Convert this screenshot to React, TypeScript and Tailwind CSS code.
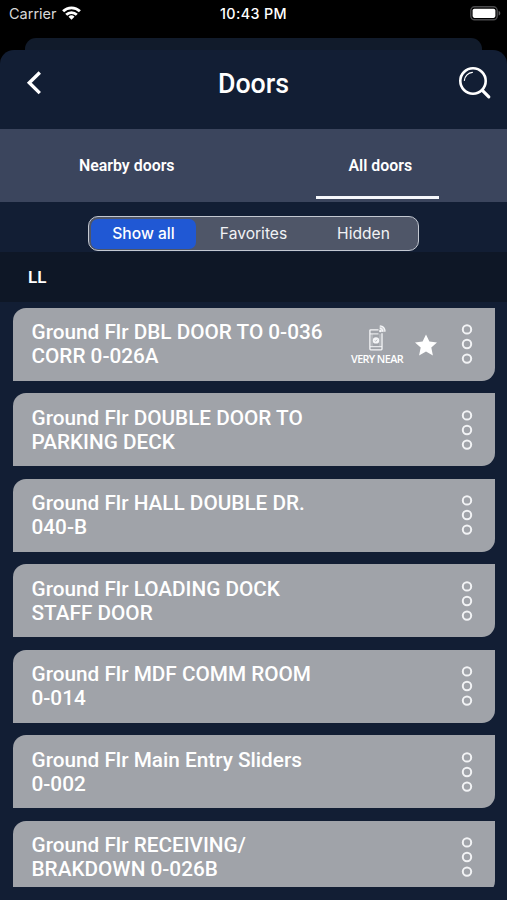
import { useState } from "react";
import { clsx } from "clsx";

type Door = {
  name: [string, string];
  veryNear?: boolean;
  favorite?: boolean;
};

const doors: Door[] = [
  { name: ["Ground Flr DBL DOOR TO 0-036", "CORR 0-026A"], veryNear: true, favorite: true },
  { name: ["Ground Flr DOUBLE DOOR TO", "PARKING DECK"] },
  { name: ["Ground Flr HALL DOUBLE DR.", "040-B"] },
  { name: ["Ground Flr LOADING DOCK", "STAFF DOOR"] },
  { name: ["Ground Flr MDF COMM ROOM", "0-014"] },
  { name: ["Ground Flr Main Entry Sliders", "0-002"] },
  { name: ["Ground Flr RECEIVING/", "BRAKDOWN 0-026B"] },
];

const tabs = ["Nearby doors", "All doors"];
const filters = ["Show all", "Favorites", "Hidden"];

// ── Icons ──────────────────────────────────────────────────

function WifiIcon() {
  return (
    <svg width="19" height="14" viewBox="0 0 19 14" fill="none" stroke="#fff" strokeWidth="2.8">
      <path d="M1.1 5.3a12 12 0 0 1 16.8 0" />
      <path d="M4.2 8.7a7.6 7.6 0 0 1 10.6 0" />
      <path d="m9.5 13.8-3-3a4.3 4.3 0 0 1 6 0Z" fill="#fff" stroke="none" />
    </svg>
  );
}

function BatteryIcon() {
  return (
    <svg width="31" height="15" viewBox="0 0 31 15">
      <rect x="0.8" y="0.8" width="26.4" height="13" rx="3.8" fill="#000" stroke="#4b4b4d" strokeWidth="1.4" />
      <rect x="2.6" y="2.7" width="22.8" height="9.2" rx="1.8" fill="#fff" />
      <path d="M28.6 5v4.6c1-.3 1.7-1.2 1.7-2.3s-.7-2-1.7-2.3Z" fill="#5c5c5e" />
    </svg>
  );
}

function BackIcon() {
  return (
    <svg width="16" height="24" viewBox="0 0 16 24" fill="none" stroke="#fff" strokeWidth="3.4">
      <path d="M13.8 1.5 3.3 11.8l10.5 10.3" />
    </svg>
  );
}

function SearchIcon() {
  return (
    <svg width="34" height="34" viewBox="0 0 34 34" fill="none" stroke="#fff" strokeLinecap="round">
      <circle cx="15" cy="15" r="12.7" strokeWidth="2.6" />
      <path d="m24.6 24.6 6.2 6.2" strokeWidth="3.2" />
      <path d="M6.4 14.3a9 9 0 0 1 8-8" strokeWidth="1.2" />
    </svg>
  );
}

function NearPhoneIcon() {
  return (
    <svg width="17" height="26" viewBox="0 0 17 26" fill="none" stroke="#f5f6f8">
      <path d="M9.5 4.8H1.7Q.9 4.8.9 5.6v18.4q0 .8.8.8h10.5q.8 0 .8-.8V8.3" strokeWidth="1.3" />
      <path d="M1 8.9h8.5M1 21.7h12" strokeWidth="1" />
      <path d="M3 9v12.5M11 9v12.5" strokeWidth="0.7" opacity="0.6" />
      <circle cx="7" cy="15.4" r="3.2" fill="#f5f6f8" stroke="none" />
      <path d="m5.8 15.5.9.9 1.5-1.8" stroke="#a0a3a9" strokeWidth="0.7" />
      <path d="M10.6 1.2q4.9.5 5.4 5.6l-5.4.2Z" fill="#f5f6f8" fillOpacity="0.55" stroke="none" />
      <path d="M10.8.9q5 .3 5.3 5.7M10.8 3.2q2.6.3 2.9 3.4" strokeWidth="1.3" />
      <circle cx="11.3" cy="6.1" r="1.2" fill="#f5f6f8" stroke="none" />
    </svg>
  );
}

function StarIcon() {
  return (
    <svg width="22" height="22" viewBox="0 0 22 22" fill="#fff">
      <path d="m11 .4 3.4 7.1 7.6.9-5.7 5.2 1.6 7.8-6.9-3.9-6.9 3.9 1.6-7.8L0 8.4l7.6-.9Z" />
    </svg>
  );
}

function MoreIcon() {
  return (
    <svg width="12" height="42" viewBox="0 0 12 42" fill="none" stroke="#f2f3f5" strokeWidth="2">
      <circle cx="6" cy="6.4" r="4.2" />
      <circle cx="6" cy="21" r="4.2" />
      <circle cx="6" cy="35.6" r="4.2" />
    </svg>
  );
}

// ── Door row ───────────────────────────────────────────────

function DoorCard({ door }: { door: Door }) {
  return (
    <li className="flex h-[73px] shrink-0 rounded-tl-[13px] rounded-br-[13px] bg-[#a0a3a9] pl-[18.5px]">
      <p className="w-[311.5px] pt-[12.5px] text-[20.75px] leading-6 font-medium whitespace-nowrap text-white">
        {door.name[0]}
        <br />
        {door.name[1]}
      </p>
      <div className="flex w-[68px] flex-col items-center pt-[17px]">
        {door.veryNear && (
          <>
            <NearPhoneIcon />
            <span className="mt-[1px] font-['Open_Sans',sans-serif] text-[10.8px] leading-[14px] font-semibold tracking-[-0.6px] whitespace-nowrap text-white">
              VERY NEAR
            </span>
          </>
        )}
      </div>
      <div className="w-[30px] pt-[26px] pl-[4px]">{door.favorite && <StarIcon />}</div>
      <button aria-label="More" className="ml-[20px] flex h-[73px] items-center">
        <MoreIcon />
      </button>
    </li>
  );
}

// ── Screen ─────────────────────────────────────────────────

export default function App() {
  const [tab, setTab] = useState("All doors");
  const [filter, setFilter] = useState("Show all");

  return (
    <div className="flex h-[900px] w-[507px] flex-col overflow-hidden bg-black font-[Roboto,sans-serif] text-white">
      <div className="grid h-[38px] shrink-0 grid-cols-[1fr_auto_1fr] items-start px-[9px] font-[Inter,sans-serif] text-[14.3px] leading-7">
        <div className="flex gap-[5px] text-[#d8d8d8]">
          <span className="text-[14.5px]">Carrier</span>
          <span className="pt-[6px]">
            <WifiIcon />
          </span>
        </div>
        <span className="font-medium tracking-[0.4px]">10:43 PM</span>
        <div className="-mr-[3px] flex justify-end pt-[6px]">
          <BatteryIcon />
        </div>
      </div>

      {/* edge of the sheet underneath */}
      <div className="mx-[25px] h-3 shrink-0 rounded-t-[11px] bg-[#111b2b]" />

      <main className="flex flex-1 flex-col overflow-hidden rounded-t-[14px] bg-[#121e34]">
        <header className="grid h-[79px] shrink-0 grid-cols-[1fr_auto_1fr] items-start px-[15px]">
          <button aria-label="Back" className="mt-[21px] ml-[11px] w-[36px]">
            <BackIcon />
          </button>
          <h1 className="mt-[18px] text-[26.8px] leading-8 font-medium">Doors</h1>
          <button aria-label="Search" className="mt-[16px] justify-self-end">
            <SearchIcon />
          </button>
        </header>

        <nav className="grid h-[73px] shrink-0 grid-cols-2 bg-[#3b455d]">
          {tabs.map((t) => (
            <button
              key={t}
              onClick={() => setTab(t)}
              className="flex flex-col items-center pt-[27px] text-[15.9px] leading-5 font-semibold"
            >
              {t}
              <span
                className={clsx(
                  "mt-[20px] mr-[6px] h-[3px] w-[123px]",
                  tab === t && "bg-[#f5f7fb]"
                )}
              />
            </button>
          ))}
        </nav>

        <div className="flex h-[50px] shrink-0 justify-center pt-[14px]">
          <div className="grid h-[35px] w-[331px] grid-cols-3 gap-[5px] rounded-[10px] border-[1.5px] border-[#c3c8d1] bg-[#4f5668] px-[2px] py-[1.5px] font-[Inter,sans-serif]">
            {filters.map((f) => (
              <button
                key={f}
                onClick={() => setFilter(f)}
                className={clsx(
                  "rounded-[7px] text-[15.6px]",
                  filter === f ? "bg-[#2058d4] font-medium" : "text-[#f1f2f5]"
                )}
              >
                {f}
              </button>
            ))}
          </div>
        </div>

        <h2 className="h-[50px] shrink-0 bg-[#0e1726] pl-[28px] text-[17px] leading-[50px] font-semibold">
          LL
        </h2>

        <ul className="mt-[5.7px] flex h-[579.3px] shrink-0 flex-col gap-[12.5px] overflow-hidden pr-[12px] pl-[13px]">
          {doors.map((door) => (
            <DoorCard key={door.name[0]} door={door} />
          ))}
        </ul>
      </main>
    </div>
  );
}
